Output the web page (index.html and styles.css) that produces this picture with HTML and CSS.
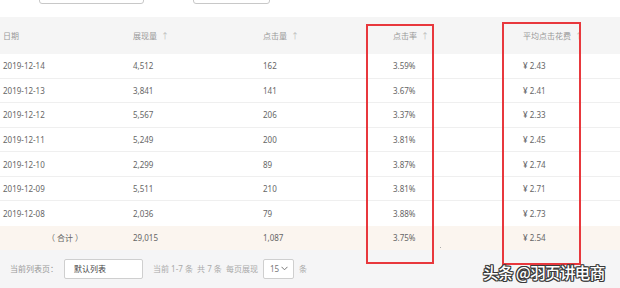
FILE: index.html
```html
<!DOCTYPE html>
<html lang="zh">
<head>
<meta charset="utf-8">
<link rel="stylesheet" href="styles.css">
</head>
<body>
<div class="page">
  <div class="filters">
    <div class="fbox fbox-a"></div>
    <div class="fbox fbox-b"></div>
  </div>
  <div class="table">
    <div class="row head">
      <div class="cell">日期</div>
      <div class="cell">展现量 <span class="arr">↑</span></div>
      <div class="cell">点击量 <span class="arr">↑</span></div>
      <div class="cell">点击率 <span class="arr">↑</span></div>
      <div class="cell">平均点击花费 <span class="arr">↑</span></div>
    </div>
    <div class="row"><div class="cell">2019-12-14</div><div class="cell">4,512</div><div class="cell">162</div><div class="cell">3.59%</div><div class="cell">¥ 2.43</div></div>
    <div class="row"><div class="cell">2019-12-13</div><div class="cell">3,841</div><div class="cell">141</div><div class="cell">3.67%</div><div class="cell">¥ 2.41</div></div>
    <div class="row"><div class="cell">2019-12-12</div><div class="cell">5,567</div><div class="cell">206</div><div class="cell">3.37%</div><div class="cell">¥ 2.33</div></div>
    <div class="row"><div class="cell">2019-12-11</div><div class="cell">5,249</div><div class="cell">200</div><div class="cell">3.81%</div><div class="cell">¥ 2.45</div></div>
    <div class="row"><div class="cell">2019-12-10</div><div class="cell">2,299</div><div class="cell">89</div><div class="cell">3.87%</div><div class="cell">¥ 2.74</div></div>
    <div class="row"><div class="cell">2019-12-09</div><div class="cell">5,511</div><div class="cell">210</div><div class="cell">3.81%</div><div class="cell">¥ 2.71</div></div>
    <div class="row last"><div class="cell">2019-12-08</div><div class="cell">2,036</div><div class="cell">79</div><div class="cell">3.88%</div><div class="cell">¥ 2.73</div></div>
    <div class="row total"><div class="cell center">（ 合计 ）</div><div class="cell">29,015</div><div class="cell">1,087</div><div class="cell">3.75%</div><div class="cell">¥ 2.54</div></div>
  </div>
  <div class="footer">
    <span class="label">当前列表页：</span>
    <div class="input">默认列表</div>
    <span class="info">当前 1-7 条&nbsp;&nbsp;共 7 条&nbsp;&nbsp;每页展现</span>
    <div class="select">15<svg class="chev" width="7" height="5" viewBox="0 0 7 5"><path d="M0.5 0.8 L3.5 3.8 L6.5 0.8" fill="none" stroke="#777" stroke-width="1"/></svg></div>
    <span class="info">条</span>
  </div>
  <div class="mark mark-a"></div>
  <div class="mark mark-b"></div>
  <div class="dot"></div>
  <div class="watermark">头条 @羽页讲电商</div>
</div>
</body>
</html>
```
FILE: styles.css
```css
html, body {
  margin: 0;
  padding: 0;
  background: #ffffff;
}
.page {
  position: relative;
  width: 620px;
  height: 288px;
  overflow: hidden;
  font-family: "Noto Sans", "Noto Sans CJK SC", sans-serif;
  font-size: 8px;
  color: #666;
}
.filters {
  height: 17px;
  display: flex;
  align-items: flex-end;
}
.fbox {
  box-sizing: border-box;
  height: 20px;
  margin-top: -16px;
  align-self: flex-start;
  border: 1px solid #c8c8c8;
  border-radius: 3px;
  background: #fff;
}
.fbox-a { margin-left: 39px; width: 105px; }
.fbox-b { margin-left: 49px; width: 77px; }
.table {
  width: 650px;
}
.row {
  display: grid;
  grid-template-columns: 130px 130px 130px 130px 130px;
  box-sizing: border-box;
  height: 24.57px;
  border-bottom: 1px solid #efefef;
  align-items: center;
}
.row.last { border-bottom: none; }
.cell {
  padding-left: 3px;
  white-space: nowrap;
}
.cell.center { padding-left: 0; text-align: center; }
.head {
  height: 37px;
  background: #f5f5f5;
  color: #999;
  border-bottom: none;
}
.arr { color: #bbb; margin-left: 2px; }
.total {
  height: 24px;
  background: #fbf5ef;
  border-bottom: none;
}
.footer {
  height: 38px;
  background: #f5f5f6;
  display: flex;
  align-items: center;
  padding-left: 10px;
}
.label { color: #999; width: 54px; }
.input {
  box-sizing: border-box;
  width: 79px;
  height: 20px;
  border: 1px solid #cfcfcf;
  border-radius: 2px;
  background: #fff;
  color: #444;
  display: flex;
  align-items: center;
  padding-left: 9px;
  margin-right: 10px;
}
.info { color: #aaa; }
.select {
  box-sizing: border-box;
  width: 31px;
  height: 20px;
  border: 1px solid #cfcfcf;
  border-radius: 2px;
  background: #fff;
  color: #777;
  display: flex;
  align-items: center;
  padding-left: 6px;
  gap: 2px;
  margin: 0 5px 0 5px;
}
.chev { display: block; }
.mark {
  position: absolute;
  box-sizing: border-box;
  border: 2px solid #e8383d;
}
.mark-a { left: 366px; top: 24px; width: 68px; height: 240px; }
.mark-b { left: 502px; top: 22px; width: 79px; height: 243px; }
.dot {
  position: absolute;
  left: 440px;
  top: 247px;
  width: 1px;
  height: 1px;
  background: #aaa;
}
.watermark {
  position: absolute;
  left: 483px;
  top: 261px;
  font-family: "Noto Sans CJK SC", sans-serif;
  font-size: 15.5px;
  font-weight: 500;
  color: #fff;
  letter-spacing: -0.6px;
  text-shadow: 1px 0 0 #3a3a3a, -1px 0 0 #3a3a3a, 0 1px 0 #3a3a3a, 0 -1px 0 #3a3a3a, 1px 1px 0 #3a3a3a, -1px -1px 0 #3a3a3a, 1px -1px 0 #3a3a3a, -1px 1px 0 #3a3a3a;
}
```
